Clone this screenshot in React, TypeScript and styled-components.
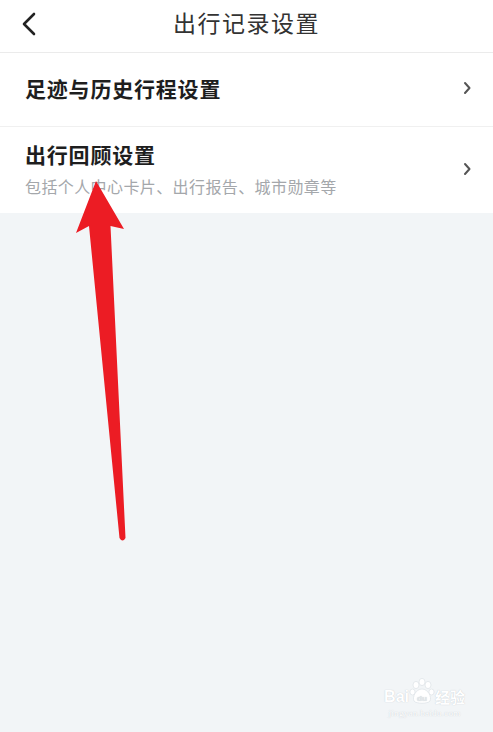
import { JSX } from 'react';
import styled, { createGlobalStyle } from 'styled-components';

const GlobalStyle = createGlobalStyle`
  html, body {
    margin: 0;
    padding: 0;
    background: #f2f5f7;
  }
  body {
    font-family: "Noto Sans CJK SC", "Noto Sans", sans-serif;
  }
`;

const Page = styled.div`
  position: relative;
  width: 493px;
  min-height: 732px;
  display: flex;
  flex-direction: column;
  background: #f2f5f7;
  overflow: hidden;
`;

const Header = styled.header`
  height: 52px;
  display: grid;
  grid-template-columns: 60px 1fr 60px;
  align-items: center;
  background: #ffffff;
  border-bottom: 1px solid #ebebeb;
`;

const BackButton = styled.button`
  display: flex;
  align-items: center;
  justify-content: flex-start;
  padding: 0 0 4px 21px;
  border: none;
  background: none;
  color: #222;
`;

const HeaderTitle = styled.h1`
  margin: 0 0 8px;
  text-align: center;
  font-size: 23px;
  font-weight: 400;
  color: #333;
  letter-spacing: 1.5px;
`;

const List = styled.div`
  display: flex;
  flex-direction: column;
  background: #ffffff;
`;

const Row = styled.div<{ $height: number; $divider?: boolean }>`
  height: ${(p) => p.$height}px;
  display: flex;
  align-items: center;
  justify-content: space-between;
  padding: 0 22px 3px 25px;
  box-sizing: border-box;
  border-bottom: ${(p) => (p.$divider ? '1px solid #f0f0f0' : 'none')};
`;

const RowText = styled.div`
  display: flex;
  flex-direction: column;
  gap: 10px;
`;

const RowTitle = styled.div`
  font-size: 21px;
  font-weight: 700;
  color: #1e1e1e;
  line-height: 24px;
  letter-spacing: 0.8px;
`;

const RowSub = styled.div`
  font-size: 16px;
  color: #a4a7ab;
  line-height: 20px;
  letter-spacing: 0.4px;
`;

const Chevron = styled.span`
  display: flex;
  color: #555;
`;

const Arrow = styled.svg`
  position: absolute;
  left: 0;
  top: 0;
  pointer-events: none;
`;

const Watermark = styled.div`
  position: absolute;
  right: 28px;
  bottom: 14px;
  display: flex;
  flex-direction: column;
  align-items: center;
  color: #ffffff;
  text-shadow: 0 0 1px rgba(150, 160, 170, 0.6);
`;

const MarkTop = styled.div`
  display: flex;
  align-items: flex-end;
  font-family: "Liberation Sans", sans-serif;
  font-weight: 700;
  font-size: 16px;
  line-height: 16px;
`;

const MarkCjk = styled.span`
  font-family: "Noto Sans CJK SC", sans-serif;
  font-size: 15px;
`;

const MarkSite = styled.div`
  font-family: "Liberation Serif", serif;
  font-size: 9px;
  margin-top: 3px;
  letter-spacing: 0.3px;
`;

const ChevronRight = (): JSX.Element => (
  <svg width="8" height="14" viewBox="0 0 8 14">
    <path d="M2 2 L6.5 7 L2 12" fill="none" stroke="currentColor" strokeWidth="2" strokeLinecap="round" strokeLinejoin="round" />
  </svg>
);

export default function App(): JSX.Element {
  return (
    <Page>
      <GlobalStyle />
      <Header>
        <BackButton>
          <svg width="16" height="24" viewBox="0 0 16 24">
            <path d="M13 2 L3 12 L13 22" fill="none" stroke="currentColor" strokeWidth="2.6" strokeLinecap="round" strokeLinejoin="round" />
          </svg>
        </BackButton>
        <HeaderTitle>出行记录设置</HeaderTitle>
        <span />
      </Header>
      <List>
        <Row $height={74} $divider>
          <RowTitle>足迹与历史行程设置</RowTitle>
          <Chevron>
            <ChevronRight />
          </Chevron>
        </Row>
        <Row $height={86}>
          <RowText>
            <RowTitle>出行回顾设置</RowTitle>
            <RowSub>包括个人中心卡片、出行报告、城市勋章等</RowSub>
          </RowText>
          <Chevron>
            <ChevronRight />
          </Chevron>
        </Row>
      </List>

      <Arrow width="493" height="732" viewBox="0 0 493 732">
        <path
          d="M96 181 L124 229 L110.5 226 L125.5 538 Q122.5 543 119.5 538 L89 226 L76 233 Z"
          fill="#ec1c24"
        />
      </Arrow>

      <Watermark>
        <MarkTop>
          <span>Bai</span>
          <svg width="26" height="28" viewBox="0 0 26 28">
            <g fill="#ffffff" stroke="#dfe4e8" strokeWidth="0.8">
              <ellipse cx="7" cy="8" rx="3" ry="3.6" />
              <ellipse cx="13" cy="5" rx="3" ry="3.6" />
              <ellipse cx="19" cy="8" rx="3" ry="3.6" />
              <ellipse cx="3.5" cy="15" rx="2.6" ry="3" />
              <ellipse cx="22.5" cy="15" rx="2.6" ry="3" />
              <path d="M13 12 C19 12 23 20 21 24 C19 27 7 27 5 24 C3 20 7 12 13 12 Z" />
            </g>
            <text x="13" y="24" textAnchor="middle" fontSize="8" fontWeight="700" fill="#e4e8eb" fontFamily="Liberation Sans, sans-serif">du</text>
          </svg>
          <MarkCjk>经验</MarkCjk>
        </MarkTop>
        <MarkSite>jingyan.baidu.com</MarkSite>
      </Watermark>
    </Page>
  );
}
